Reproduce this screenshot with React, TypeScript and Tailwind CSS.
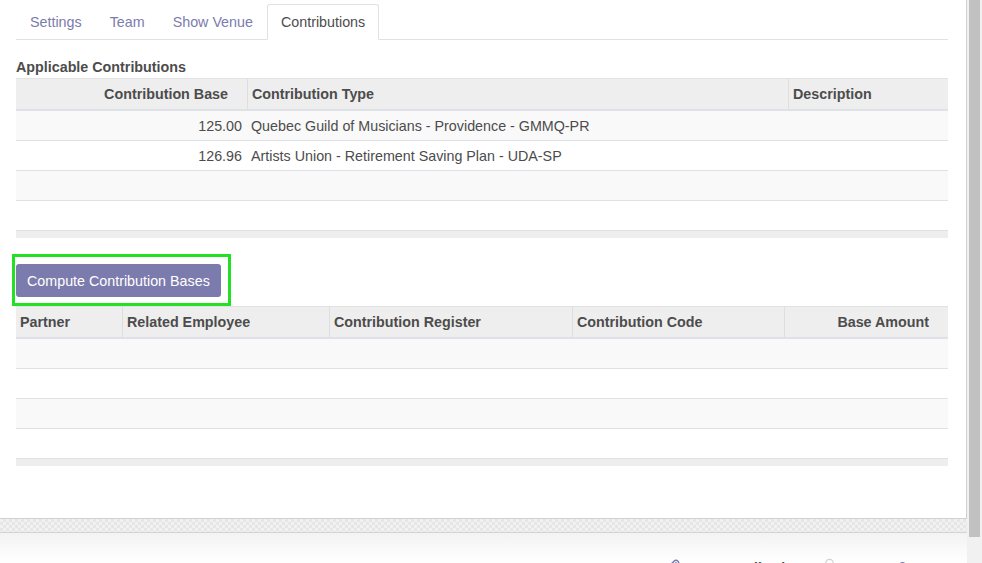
import React from "react";
import { Paperclip, Check, User, Bell } from "lucide-react";

const tabs = ["Settings", "Team", "Show Venue", "Contributions"];

function Header({ cols, cells }: { cols: string; cells: { label: string; align?: "right" }[] }) {
  return (
    <div className={`grid ${cols} h-[33px] border-t border-b-2 border-t-[#e2e2e2] border-b-[#dee2e6] bg-[#eeeeee] font-bold`}>
      {cells.map((c, i) => (
        <div
          key={i}
          className={`flex items-center ${i > 0 ? "border-l border-[#dedede]" : ""} ${
            c.align === "right" ? "justify-end pr-[19px] pl-[5px]" : "pl-[4px] pr-[5px]"
          }`}
        >
          {c.label}
        </div>
      ))}
    </div>
  );
}

export default function App() {
  const rows1 = [
    ["125.00", "Quebec Guild of Musicians - Providence - GMMQ-PR", ""],
    ["126.96", "Artists Union - Retirement Saving Plan - UDA-SP", ""],
    ["", "", ""],
    ["", "", ""],
  ];
  const cols1 = "grid-cols-[231px_541px_1fr]";
  const cols2 = "grid-cols-[106px_207px_243px_212px_1fr]";

  return (
    <div className="flex w-[982px] h-[563px] overflow-hidden bg-white font-[family-name:'Liberation_Sans',Arial,sans-serif] text-[14.3px] leading-5 text-[#4c4c4c]">
      <div className="flex flex-col w-[967px]">
        {/* Sheet */}
        <div className="h-[519px] shrink-0 bg-white border-r border-b border-[#cfcfd7] pl-4 pr-[18px] pt-[4px]">
          {/* Tabs */}
          <ul className="flex border-b border-[#dee2e6]">
            {tabs.map((t) => {
              const active = t === "Contributions";
              return (
                <li
                  key={t}
                  className={`-mb-px h-[36px] flex items-center px-[13px] border rounded-t-[3px] ${
                    active
                      ? "bg-white border-[#dee2e6] border-b-white text-[#4c4c4c]"
                      : "border-transparent text-[#7c7bad]"
                  }`}
                >
                  {t}
                </li>
              );
            })}
          </ul>

          <div className="mt-[17px] mb-[1px] h-[20px] font-bold">Applicable Contributions</div>

          {/* Table 1 */}
          <div>
            <Header
              cols={cols1}
              cells={[
                { label: "Contribution Base", align: "right" },
                { label: "Contribution Type" },
                { label: "Description" },
              ]}
            />
            {rows1.map((r, i) => (
              <div
                key={i}
                className={`grid ${cols1} h-[30px] border-b border-[#dee2e6] ${i % 2 === 0 ? "bg-[#f9f9f9]" : "bg-white"}`}
              >
                <div className="flex items-center justify-end pr-[5px]">{r[0]}</div>
                <div className="flex items-center pl-[4px]">{r[1]}</div>
                <div className="flex items-center pl-[4px]">{r[2]}</div>
              </div>
            ))}
            <div className="h-[7px] bg-[#eeeeee]" />
          </div>

          {/* Button */}
          <div className="mt-[26px] mb-[9px] relative w-fit">
            <button className="h-[33px] px-[11px] rounded-[3px] bg-[#7c7bad] text-white">
              Compute Contribution Bases
            </button>
            <span className="absolute left-[-4px] top-[-10px] w-[219px] h-[52px] border-[3px] border-[#22e022] pointer-events-none" />
          </div>

          {/* Table 2 */}
          <div>
            <Header
              cols={cols2}
              cells={[
                { label: "Partner" },
                { label: "Related Employee" },
                { label: "Contribution Register" },
                { label: "Contribution Code" },
                { label: "Base Amount", align: "right" },
              ]}
            />
            {[0, 1, 2, 3].map((i) => (
              <div
                key={i}
                className={`h-[30px] border-b border-[#dee2e6] ${i % 2 === 0 ? "bg-[#f9f9f9]" : "bg-white"}`}
              />
            ))}
            <div className="h-[7px] bg-[#eeeeee]" />
          </div>
        </div>

        {/* checker band */}
        <div className="h-[14px] shrink-0 border-b border-[#d4d4d4] bg-[repeating-conic-gradient(#e6e6e6_0%_25%,#f1f1f1_0%_50%)] bg-[length:6px_6px]" />

        {/* chatter area */}
        <div className="flex-1 bg-gradient-to-b from-[#f3f3f3] to-white relative">
          <div className="absolute left-[666px] top-[25px] flex items-start text-[14px] leading-5">
            <Paperclip size={15} className="text-[#7c7bad] mt-[1px]" strokeWidth={2.5} />
            <div className="ml-[46px] flex items-center">
              <Check size={12} className="text-[#28a745]" strokeWidth={3} />
              <span className="ml-[-2px] font-bold text-[#4c4c4c]">Following</span>
            </div>
            <Bell size={15} className="ml-[20px] text-[#d0d0d8]" />
            <div className="ml-[58px] flex items-center text-[#7c7bad]">
              <User size={15} strokeWidth={2.5} />
              <span className="ml-[2px]">1</span>
            </div>
          </div>
        </div>
      </div>

      {/* scrollbar */}
      <div className="w-[15px] h-full bg-[#f1f1f1] pl-[2px] pr-[2px]">
        <div className="h-[537px] w-[11px] bg-[#c1c1c1]" />
      </div>
    </div>
  );
}
